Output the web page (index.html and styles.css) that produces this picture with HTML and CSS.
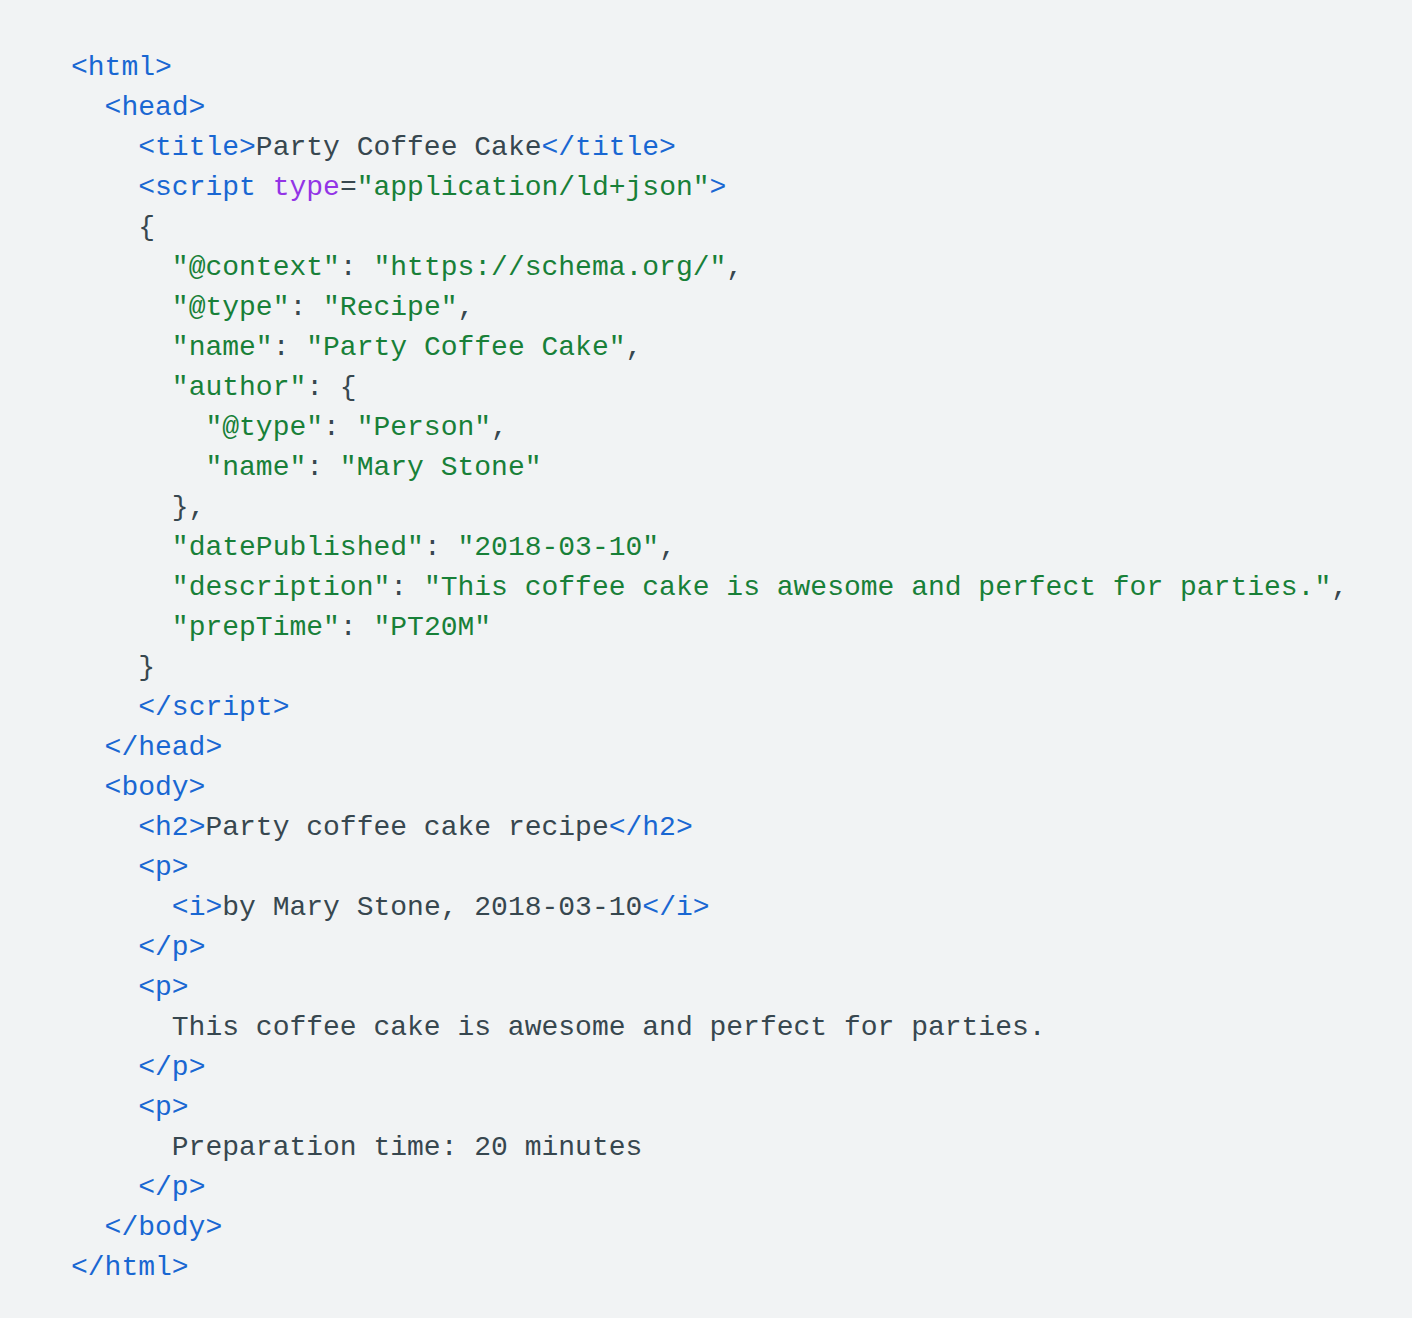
FILE: index.html
```html
<!DOCTYPE html>
<html>
<head>
<meta charset="utf-8">
<link rel="stylesheet" href="styles.css">
</head>
<body>
<pre class="code"><span class="t">&lt;html&gt;</span>
  <span class="t">&lt;head&gt;</span>
    <span class="t">&lt;title&gt;</span>Party Coffee Cake<span class="t">&lt;/title&gt;</span>
    <span class="t">&lt;script</span> <span class="a">type</span>=<span class="s">"application/ld+json"</span><span class="t">&gt;</span>
    {
      <span class="s">"@context"</span>: <span class="s">"https://schema.org/"</span>,
      <span class="s">"@type"</span>: <span class="s">"Recipe"</span>,
      <span class="s">"name"</span>: <span class="s">"Party Coffee Cake"</span>,
      <span class="s">"author"</span>: {
        <span class="s">"@type"</span>: <span class="s">"Person"</span>,
        <span class="s">"name"</span>: <span class="s">"Mary Stone"</span>
      },
      <span class="s">"datePublished"</span>: <span class="s">"2018-03-10"</span>,
      <span class="s">"description"</span>: <span class="s">"This coffee cake is awesome and perfect for parties."</span>,
      <span class="s">"prepTime"</span>: <span class="s">"PT20M"</span>
    }
    <span class="t">&lt;/script&gt;</span>
  <span class="t">&lt;/head&gt;</span>
  <span class="t">&lt;body&gt;</span>
    <span class="t">&lt;h2&gt;</span>Party coffee cake recipe<span class="t">&lt;/h2&gt;</span>
    <span class="t">&lt;p&gt;</span>
      <span class="t">&lt;i&gt;</span>by Mary Stone, 2018-03-10<span class="t">&lt;/i&gt;</span>
    <span class="t">&lt;/p&gt;</span>
    <span class="t">&lt;p&gt;</span>
      This coffee cake is awesome and perfect for parties.
    <span class="t">&lt;/p&gt;</span>
    <span class="t">&lt;p&gt;</span>
      Preparation time: 20 minutes
    <span class="t">&lt;/p&gt;</span>
  <span class="t">&lt;/body&gt;</span>
<span class="t">&lt;/html&gt;</span></pre>
</body>
</html>
```
FILE: styles.css
```css
html, body {
  margin: 0;
  padding: 0;
  background: #f1f3f4;
}
.code {
  margin: 0;
  padding: 48px 0 30px 71px;
  font-family: "Liberation Mono", "DejaVu Sans Mono", monospace;
  font-size: 28px;
  line-height: 40px;
  color: #37474f;
  background: #f1f3f4;
}
.t { color: #1967d2; }
.s { color: #188038; }
.a { color: #9334e6; }
```
